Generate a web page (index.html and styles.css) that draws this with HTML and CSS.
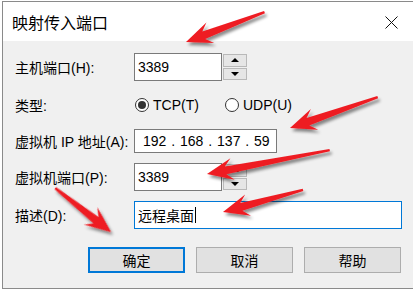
FILE: index.html
```html
<!DOCTYPE html>
<html lang="zh-CN">
<head>
<meta charset="utf-8">
<title>映射传入端口</title>
<link rel="stylesheet" href="styles.css">
</head>
<body>
<div class="window">
  <div class="titlebar">
    <span class="title">映射传入端口</span>
    <svg class="close" width="13" height="13" viewBox="0 0 13 13"><path d="M0.5 0.5 L12.5 12.5 M12.5 0.5 L0.5 12.5" stroke="#111" stroke-width="1" fill="none"/></svg>
  </div>
  <div class="client">
    <div class="form">
      <span class="label">主机端口(H):</span>
      <div class="spin">
        <div class="box port">3389</div>
        <div class="spin-btns">
          <div class="sbtn"><span class="tri up"></span></div>
          <div class="sbtn"><span class="tri down"></span></div>
        </div>
      </div>

      <span class="label">类型:</span>
      <div class="radios">
        <span class="opt first"><span class="radio checked"></span>TCP(T)</span>
        <span class="opt"><span class="radio"></span>UDP(U)</span>
      </div>

      <span class="label">虚拟机 IP 地址(A):</span>
      <div class="box ip">192 . 168 . 137 . 59</div>

      <span class="label">虚拟机端口(P):</span>
      <div class="spin">
        <div class="box port">3389</div>
        <div class="spin-btns">
          <div class="sbtn"><span class="tri up"></span></div>
          <div class="sbtn"><span class="tri down"></span></div>
        </div>
      </div>

      <span class="label">描述(D):</span>
      <div class="box desc">远程桌面<span class="caret"></span></div>
    </div>
    <div class="buttons">
      <div class="btn default">确定</div>
      <div class="btn">取消</div>
      <div class="btn">帮助</div>
    </div>
  </div>
</div>
<svg class="arrows" width="413" height="290" viewBox="0 0 413 290">
  <defs>
    <filter id="sh" x="-30%" y="-30%" width="160%" height="160%">
      <feDropShadow dx="2" dy="3" stdDeviation="1.6" flood-color="#000" flood-opacity="0.45"/>
    </filter>
  </defs>
  <g fill="#ee1c24" filter="url(#sh)">
    <path transform="translate(186 42) rotate(159.2)" d="M0 0 L-26 -11 L-19 -4 L-84 -1.2 L-84 1.2 L-19 4 L-26 11 Z"/>
    <path transform="translate(290 128) rotate(160.6)" d="M0 0 L-26 -11 L-19 -4 L-93 -1.2 L-93 1.2 L-19 4 L-26 11 Z"/>
    <path transform="translate(207 174) rotate(169)" d="M0 0 L-26 -11 L-19 -4 L-125 -1.2 L-125 1.2 L-19 4 L-26 11 Z"/>
    <path transform="translate(223 212) rotate(164.6)" d="M0 0 L-26 -11 L-19 -4 L-83 -1.2 L-83 1.2 L-19 4 L-26 11 Z"/>
    <path transform="translate(111 232) rotate(38.2)" d="M0 0 L-26 -11 L-19 -4 L-71 -1.2 L-71 1.2 L-19 4 L-26 11 Z"/>
  </g>
</svg>
</body>
</html>
```
FILE: styles.css
```css
* { box-sizing: border-box; }
html, body { margin: 0; padding: 0; }
body {
  width: 413px;
  height: 290px;
  position: relative;
  overflow: hidden;
  background: #ffffff;
  font-family: "Liberation Sans", "Noto Sans CJK SC", sans-serif;
  font-size: 14px;
  color: #000;
}
.window {
  margin: 1px 0 0 2px;
  width: 411px;
  height: 288px;
  border: 1px solid #8a8a8a;
  border-right: none;
  display: flex;
  flex-direction: column;
  background: #f0f0f0;
}
.titlebar {
  height: 39px;
  flex: none;
  background: #fff;
  display: flex;
  align-items: center;
  justify-content: space-between;
  padding: 0 15px 0 9px;
}
.title {
  font-family: "Noto Sans CJK SC", sans-serif;
  font-size: 16px;
  color: #000;
}
.close { display: block; margin-top: 2px; }
.client {
  flex: 1;
  padding: 12px 0 0 12px;
}
.form {
  display: grid;
  grid-template-columns: 119px auto;
  grid-template-rows: 28px 28px 24px 28px 28px;
  row-gap: 10px;
  align-items: center;
}
.label { white-space: nowrap; }
.box {
  background: #fff;
  border: 1px solid #7a7a7a;
  display: flex;
  align-items: center;
  white-space: nowrap;
}
.spin { display: flex; height: 28px; }
.port { width: 88px; height: 28px; padding-left: 3px; }
.spin-btns {
  width: 24px;
  margin-left: 1px;
  display: flex;
  flex-direction: column;
  gap: 1px;
  padding: 1px 0;
}
.sbtn {
  flex: 1;
  background: #e6e6e6;
  border: 1px solid #b9b9b9;
  display: flex;
  align-items: center;
  justify-content: center;
}
.tri { width: 0; height: 0; border-left: 4px solid transparent; border-right: 4px solid transparent; }
.tri.up { border-bottom: 4px solid #000; }
.tri.down { border-top: 4px solid #000; }
.radios { display: flex; align-items: center; padding-left: 1px; }
.opt { display: inline-flex; align-items: center; gap: 4px; }
.opt.first { width: 90px; }
.radio {
  width: 14px;
  height: 14px;
  border-radius: 50%;
  border: 1px solid #333;
  background: #fff;
  display: inline-flex;
  align-items: center;
  justify-content: center;
}
.radio.checked::after {
  content: "";
  width: 8px;
  height: 8px;
  border-radius: 50%;
  background: #333;
}
.ip { width: 143px; height: 24px; padding-left: 8px; word-spacing: 1px; }
.desc {
  width: 268px;
  height: 28px;
  border-color: #0078d7;
  padding-left: 3px;
  font-family: "Noto Sans CJK SC", sans-serif;
}
.caret { display: inline-block; width: 1px; height: 16px; background: #000; margin-left: 1px; }
.buttons {
  display: flex;
  gap: 11px;
  margin: 18px 0 0 73px;
}
.btn {
  width: 97px;
  height: 26px;
  background: #e1e1e1;
  border: 1px solid #adadad;
  display: flex;
  align-items: center;
  justify-content: center;
  font-family: "Noto Sans CJK SC", sans-serif;
  font-size: 14px;
}
.btn.default { border: 2px solid #0078d7; }
.arrows { position: absolute; left: 0; top: 0; pointer-events: none; }
```
